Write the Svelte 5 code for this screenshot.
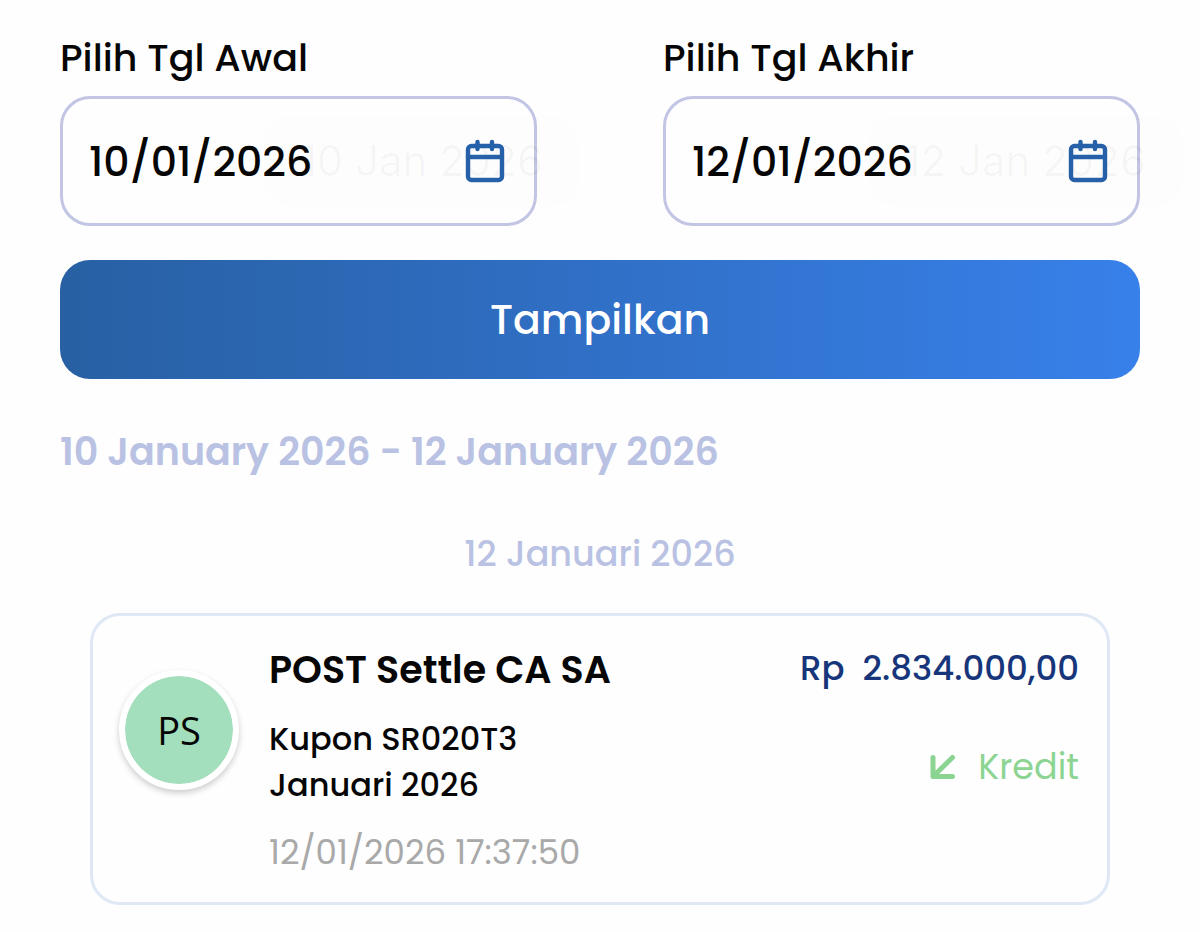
<script>
    let startDate = $state('10/01/2026');
    let endDate = $state('12/01/2026');

    const transactions = [
        {
            initials: 'PS',
            title: 'POST Settle CA SA',
            notes: ['Kupon SR020T3', 'Januari 2026'],
            time: '12/01/2026 17:37:50',
            amount: '2.834.000,00',
            type: 'Kredit'
        }
    ];
</script>

{#snippet calendar()}
    <svg width="40" height="44" viewBox="0 0 40 44" fill="none" stroke="currentColor" stroke-width="4.400" stroke-linecap="round">
        <rect x="3" y="7" width="34" height="34" rx="3.500" />
        <path d="M3 18H37M12.500 3V10M27 3V10" />
    </svg>
{/snippet}

<main>
    <form onsubmit={(e) => e.preventDefault()}>
        <div class="fields">
            <div class="field">
                <label for="start">Pilih Tgl Awal</label>
                <div class="box">
                    <span class="ghost" aria-hidden="true">10 Jan 2026</span>
                    <input id="start" type="text" bind:value={startDate} />
                    <button type="button" class="pick" aria-label="Pilih Tgl Awal">{@render calendar()}</button>
                </div>
            </div>
            <div class="field">
                <label for="end">Pilih Tgl Akhir</label>
                <div class="box">
                    <span class="ghost" aria-hidden="true">12 Jan 2026</span>
                    <input id="end" type="text" bind:value={endDate} />
                    <button type="button" class="pick" aria-label="Pilih Tgl Akhir">{@render calendar()}</button>
                </div>
            </div>
        </div>
        <button class="submit">Tampilkan</button>
    </form>

    <h2>10 January 2026 - 12 January 2026</h2>

    <section>
        <h3>12 Januari 2026</h3>
        {#each transactions as item}
            <article class="card">
                <div class="avatar">{item.initials}</div>
                <div class="detail">
                    <h4>{item.title}</h4>
                    <p class="notes">
                        {#each item.notes as note}
                            <span>{note}</span>
                        {/each}
                    </p>
                    <time>{item.time}</time>
                </div>
                <div class="side">
                    <p class="amount"><span>Rp</span><span>{item.amount}</span></p>
                    <p class="type">
                        <svg width="26" height="26" viewBox="0 0 26 26" fill="none" stroke="currentColor" stroke-width="5" stroke-linecap="round" stroke-linejoin="round">
                            <path d="M3 3.500V22.500H22.500M3.500 22L22.500 3.500" />
                        </svg>
                        <span>{item.type}</span>
                    </p>
                </div>
            </article>
        {/each}
    </section>
</main>

<style>
    :global(body) {
        margin: 0;
        background: #fefefe;
    }

    main {
        padding: 33px 60px 26px;
        font-family: Poppins, Inter, "Liberation Sans", sans-serif;
        color: #060606;
    }

    h2, h3, h4, p {
        margin: 0;
    }

    button, input {
        font-family: inherit;
        border: none;
        background: none;
        padding: 0;
    }

    .fields {
        display: grid;
        grid-template-columns: repeat(2, minmax(0, 1fr));
        gap: 126px;
    }

    label {
        display: block;
        font-size: 38px;
        font-weight: 500;
        line-height: 50px;
        margin-bottom: 13px;
    }

    .box {
        position: relative;
        display: flex;
        align-items: center;
        height: 130px;
        box-sizing: border-box;
        padding: 0 29px 0 26px;
        border: 3px solid #c2c5e3;
        border-radius: 30px;
    }

    .box input {
        flex: 1;
        min-width: 0;
        color: inherit;
        font-size: 41px;
        font-weight: 500;
        outline: none;
    }

    .ghost {
        position: absolute;
        right: -45px;
        padding: 18px 36px;
        border-radius: 24px;
        background: rgba(0, 0, 0, 0.004);
        color: rgba(0, 0, 0, 0.03);
        font-family: Inter, sans-serif;
        font-size: 42px;
        line-height: 54px;
        white-space: nowrap;
    }

    .box input, .pick {
        position: relative;
    }

    .pick {
        display: flex;
        color: #2560a8;
    }

    .submit {
        display: block;
        width: 100%;
        height: 119px;
        margin-top: 34px;
        border-radius: 30px;
        background: linear-gradient(90deg, #2860a3, #2d69b8 30%, #3880ea);
        color: #fff;
        font-size: 41px;
        font-weight: 500;
    }

    h2 {
        margin-top: 48px;
        color: #b9c2e3;
        font-size: 38px;
        font-weight: 600;
        line-height: 50px;
    }

    h3 {
        margin: 53px 0 35px;
        color: #b9c2e3;
        font-size: 35px;
        font-weight: 500;
        line-height: 48px;
        text-align: center;
    }

    .card {
        display: flex;
        margin: 0 30px;
        padding: 27px 28px 26px 26px;
        border: 3px solid #dfe8f4;
        border-radius: 30px;
    }

    .avatar {
        flex: none;
        display: flex;
        align-items: center;
        justify-content: center;
        width: 108px;
        height: 108px;
        margin-top: 27px;
        border: 6px solid #fff;
        border-radius: 50%;
        background: #a3dfbc;
        background-clip: padding-box;
        box-shadow: 0 3px 6px rgba(0, 0, 0, 0.2);
        font-family: "Open Sans", sans-serif;
        font-size: 38px;
    }

    .detail {
        flex: 1;
        margin-left: 30px;
    }

    h4 {
        font-size: 38px;
        font-weight: 600;
        line-height: 54px;
    }

    .notes {
        margin: 19px 0 20px;
        font-size: 32px;
        font-weight: 500;
        line-height: 46px;
    }

    .notes span {
        display: block;
    }

    time {
        display: block;
        color: #a9a9a9;
        font-size: 34px;
        line-height: 48px;
    }

    .side {
        display: flex;
        flex-direction: column;
        align-items: flex-end;
        gap: 50px;
    }

    .amount {
        display: flex;
        gap: 18px;
        color: #17357a;
        font-size: 34px;
        font-weight: 500;
        line-height: 50px;
    }

    .type {
        display: flex;
        align-items: center;
        gap: 22px;
        color: #8cd492;
        font-size: 35px;
        line-height: 48px;
    }
</style>
